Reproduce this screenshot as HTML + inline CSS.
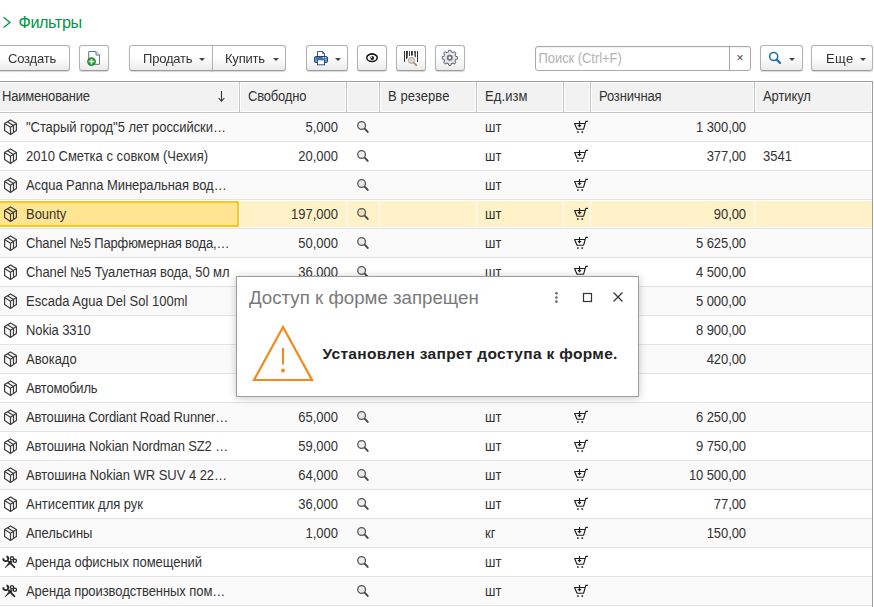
<!DOCTYPE html>
<html><head><meta charset="utf-8"><title>Номенклатура</title>
<style>
html,body{margin:0;padding:0;background:#fff;}
body{width:874px;height:607px;position:relative;overflow:hidden;font-family:"Liberation Sans",sans-serif;font-size:13px;color:#333;}
.abs{position:absolute;}
.title{position:absolute;left:18.5px;top:12.7px;font-size:16.2px;letter-spacing:-0.4px;color:#009646;line-height:18px;}
.btn{position:absolute;top:45px;height:24px;border:1px solid #b2b2b2;border-bottom-color:#9c9c9c;border-radius:3px;background:linear-gradient(#ffffff 0%,#ffffff 45%,#ebebeb 100%);box-shadow:0 1px 1px rgba(0,0,0,.16);box-sizing:content-box;color:#333;font-size:13px;letter-spacing:-0.2px;line-height:25px;white-space:nowrap;}
.btn span.t{position:absolute;top:0;will-change:transform;}
.car{position:absolute;top:12px;width:0;height:0;border-left:3.5px solid transparent;border-right:3.5px solid transparent;border-top:3.3px solid #444;}
.tbl{position:absolute;left:0;top:81px;width:872px;height:526px;border-top:1px solid #a0a0a0;border-right:1px solid #a0a0a0;}
.hc{position:absolute;top:0px;height:30px;background:#f2f2f2;border:1px solid #fff;box-sizing:border-box;color:#333;line-height:28px;font-size:13px;letter-spacing:-0.2px;white-space:nowrap;}
.ht{display:inline-block;line-height:28px;transform:scaleY(1.08);transform-origin:0 18.5px;}
.hs{position:absolute;top:0px;width:1px;height:30px;background:#c4c4c4;}
.hl{position:absolute;left:0;top:30px;width:872px;height:1px;background:#c4c4c4;}
.row{position:absolute;left:0;width:872px;height:28px;border-bottom:1px solid #e3e3e3;}
.row.o{background:#fafafa;}
.row.e{background:#ffffff;}
.c{position:absolute;top:0;height:28px;line-height:30px;white-space:nowrap;overflow:hidden;font-size:13px;color:#333;transform:scaleY(1.08);transform-origin:0 19.5px;}
.r{text-align:right;}
.ic{position:absolute;left:0;top:0;}
.mg{position:absolute;left:357px;top:8px;}
.ct{position:absolute;left:573px;top:7px;}
.sel .c.bg{background:#fff2c8;}
.dlg{position:absolute;left:236px;top:276px;width:401px;height:119px;background:#fff;border:1px solid #9e9e9e;box-shadow:0 1px 8px rgba(0,0,0,.22);}
</style></head><body>

<svg class="abs" style="left:2px;top:15px" width="10" height="14" viewBox="0 0 10 14"><path d="M1.6 2.2 L8 7.4 L1.6 12.6" fill="none" stroke="#009646" stroke-width="1.3"/></svg>
<div class="title">Фильтры</div>
<div class="btn" style="left:-3px;width:71px;"><span class="t" style="left:9.5px">Создать</span></div>
<div class="btn" style="left:79px;width:28px;"><svg class="abs" style="left:0;top:0" width="28" height="24" viewBox="0 0 28 24"><path d="M8.7 5.5 L16 5.5 L19.5 9 L19.5 18.3 L8.7 18.3 Z" fill="#fff" stroke="#5c7492" stroke-width="1"/><path d="M16 5.5 L16 9 L19.5 9" fill="#eef2f7" stroke="#5c7492" stroke-width="1"/><circle cx="11.5" cy="15.6" r="4.4" fill="#1e962c"/><path d="M11.5 12.9 L11.5 18.3 M8.8 15.6 L14.2 15.6" stroke="#fff" stroke-width="1.5"/></svg></div>
<div class="btn" style="left:129px;width:82px;border-radius:3px 0 0 3px;"><span class="t" style="left:13px">Продать</span><i class="car" style="left:69px"></i></div>
<div class="btn" style="left:212px;width:72px;border-radius:0 3px 3px 0;"><span class="t" style="left:12px">Купить</span><i class="car" style="left:60px"></i></div>
<div class="btn" style="left:306px;width:40px;"><svg class="abs" style="left:0;top:0" width="40" height="24" viewBox="0 0 40 24"><path d="M10.5 10 L10.5 5.5 L15.5 5.5 L17.5 7.5 L17.5 10" fill="#fff" stroke="#33587f" stroke-width="1"/><path d="M15.5 5.5 L15.5 7.5 L17.5 7.5" fill="none" stroke="#33587f" stroke-width="0.8"/><rect x="7.5" y="10.5" width="13" height="6" rx="1.3" fill="#6f97c4" stroke="#1f4b78" stroke-width="1"/><path d="M9 12 L19.5 12" stroke="#1f4b78" stroke-width="1"/><rect x="15.8" y="11.3" width="1.2" height="1" fill="#fff"/><rect x="17.8" y="11.3" width="1.2" height="1" fill="#fff"/><rect x="10.5" y="13.8" width="7" height="5" fill="#fff" stroke="#33587f" stroke-width="1"/></svg><i class="car" style="left:28px"></i></div>
<div class="btn" style="left:357px;width:28px;"><svg class="abs" style="left:0;top:0" width="28" height="24" viewBox="0 0 28 24"><ellipse cx="14" cy="11.7" rx="5.2" ry="3.7" fill="#fff" stroke="#1c1c1c" stroke-width="1.5"/><path d="M8.6 10.6 Q14 5.6 19.4 10.6" fill="none" stroke="#1c1c1c" stroke-width="1.4"/><circle cx="14.2" cy="12" r="1.9" fill="#1c1c1c"/><circle cx="13.6" cy="11.3" r="0.7" fill="#fff"/></svg></div>
<div class="btn" style="left:396px;width:28px;"><svg class="abs" style="left:0;top:0" width="28" height="24" viewBox="0 0 28 24"><g fill="#303030"><rect x="7" y="5" width="1" height="11"/><path d="M9 5 L11 5 L10.6 12 L9 13.5 Z"/><rect x="12" y="5" width="0.9" height="5"/><rect x="14" y="5" width="1.8" height="4.6"/><path d="M17.2 5 L18.8 5 L18.8 11.5 L17.6 10.5 Z"/><rect x="20" y="5" width="1" height="11"/></g><circle cx="14.4" cy="14.4" r="3" fill="#c9dcf7" stroke="#c59a78" stroke-width="1"/><path d="M16.9 16.9 L19.4 19.2" stroke="#c08a58" stroke-width="1.9" stroke-linecap="round"/></svg></div>
<div class="btn" style="left:435px;width:28px;"><svg class="abs" style="left:0;top:0" width="28" height="24" viewBox="0 0 28 24"><path d="M12.35 5.98 L12.47 5.13 Q12.35 4.34 12.97 4.25 L14.63 4.25 Q15.25 4.34 15.13 5.13 L15.25 5.98 A6.00 6.00 0 0 1 16.89 6.66 L17.58 6.15 Q18.05 5.50 18.55 5.87 L19.73 7.05 Q20.10 7.55 19.45 8.02 L18.94 8.71 A6.00 6.00 0 0 1 19.62 10.35 L20.47 10.47 Q21.26 10.35 21.35 10.97 L21.35 12.63 Q21.26 13.25 20.47 13.13 L19.62 13.25 A6.00 6.00 0 0 1 18.94 14.89 L19.45 15.58 Q20.10 16.05 19.73 16.55 L18.55 17.73 Q18.05 18.10 17.58 17.45 L16.89 16.94 A6.00 6.00 0 0 1 15.25 17.62 L15.13 18.47 Q15.25 19.26 14.63 19.35 L12.97 19.35 Q12.35 19.26 12.47 18.47 L12.35 17.62 A6.00 6.00 0 0 1 10.71 16.94 L10.02 17.45 Q9.55 18.10 9.05 17.73 L7.87 16.55 Q7.50 16.05 8.15 15.58 L8.66 14.89 A6.00 6.00 0 0 1 7.98 13.25 L7.13 13.13 Q6.34 13.25 6.25 12.63 L6.25 10.97 Q6.34 10.35 7.13 10.47 L7.98 10.35 A6.00 6.00 0 0 1 8.66 8.71 L8.15 8.02 Q7.50 7.55 7.87 7.05 L9.05 5.87 Q9.55 5.50 10.02 6.15 L10.71 6.66 A6.00 6.00 0 0 1 12.35 5.98 Z" fill="#ededed" stroke="#6d7482" stroke-width="1.05" stroke-linejoin="round"/><circle cx="13.8" cy="11.8" r="3.6" fill="none" stroke="#d4d6da" stroke-width="0.8"/><circle cx="13.8" cy="11.8" r="2.1" fill="#fff" stroke="#6d7482" stroke-width="1.8"/></svg></div>
<div class="abs" style="left:535px;top:46px;width:214px;height:23px;border:1px solid #a8a8a8;border-radius:3px;background:#fff;box-shadow:inset 0 1px 1px rgba(0,0,0,.06)"><span class="abs" style="left:2.5px;top:0;line-height:23px;font-size:13px;letter-spacing:-0.06px;color:#b4b4b4;transform:scaleY(1.08);transform-origin:0 16px">Поиск (Ctrl+F)</span><i class="abs" style="left:193px;top:0;width:1px;height:23px;background:#a8a8a8"></i><span class="abs" style="left:194px;top:0;width:20px;text-align:center;line-height:22px;font-size:12px;color:#444">×</span></div>
<div class="btn" style="left:760px;width:41px;"><svg class="abs" style="left:0;top:0" width="41" height="24" viewBox="0 0 41 24"><circle cx="12.7" cy="10.5" r="4" fill="none" stroke="#2673a8" stroke-width="1.6"/><path d="M15.7 13.6 L19 16.9" stroke="#2673a8" stroke-width="2.2" stroke-linecap="round"/></svg><i class="car" style="left:28px"></i></div>
<div class="btn" style="left:811px;width:60px;"><span class="t" style="left:13.5px;letter-spacing:0.4px">Еще</span><i class="car" style="left:48px"></i></div>
<div class="tbl">
<div class="hc" style="left:0px;width:239px;padding-left:2px;letter-spacing:-0.19px;border-left:0;"><span class="ht">Наименование</span></div>
<div class="hc" style="left:240px;width:106px;padding-left:7px;letter-spacing:-0.19px;"><span class="ht">Свободно</span></div>
<i class="hs" style="left:239px"></i>
<div class="hc" style="left:347px;width:32px;padding-left:7px;letter-spacing:0px;"><span class="ht"></span></div>
<i class="hs" style="left:346px"></i>
<div class="hc" style="left:380px;width:96px;padding-left:7px;letter-spacing:0.08px;"><span class="ht">В резерве</span></div>
<i class="hs" style="left:379px"></i>
<div class="hc" style="left:477px;width:86px;padding-left:7px;letter-spacing:0.1px;"><span class="ht">Ед.изм</span></div>
<i class="hs" style="left:476px"></i>
<div class="hc" style="left:564px;width:26px;padding-left:7px;letter-spacing:0px;"><span class="ht"></span></div>
<i class="hs" style="left:563px"></i>
<div class="hc" style="left:591px;width:163px;padding-left:7px;letter-spacing:-0.16px;"><span class="ht">Розничная</span></div>
<i class="hs" style="left:590px"></i>
<div class="hc" style="left:755px;width:117px;padding-left:7px;letter-spacing:-0.09px;"><span class="ht">Артикул</span></div>
<i class="hs" style="left:754px"></i>
<svg class="abs" style="left:216px;top:8px" width="11" height="13" viewBox="0 0 11 13"><path d="M5.5 1 L5.5 11 M2.6 8 L5.5 11.2 L8.4 8" fill="none" stroke="#333" stroke-width="1.1"/></svg>
<i class="hl"></i>
<div class="row o" style="top:31px">
<svg class="ic" width="22" height="28" viewBox="0 0 22 28"><g fill="none" stroke="#3c3c3c" stroke-width="1.2" stroke-linejoin="round"><path d="M10.5 6.9 L16.4 10.6 L16.4 17.5 L10.5 21.4 L4.6 17.5 L4.6 10.6 Z"/><path d="M4.6 10.6 L10.5 14.2 L16.4 10.6 M10.5 14.2 L10.5 21.4"/><path d="M7.5 8.8 L13.5 12.4 L13.5 19.3"/></g></svg>
<div class="c" style="left:26px;width:210px;letter-spacing:-0.063px">"Старый город"5 лет российски…</div>
<div class="c r" style="left:240px;width:98px">5,000</div>
<svg class="mg" width="14" height="14" viewBox="0 0 14 14"><circle cx="4.6" cy="4.55" r="3.85" fill="rgba(0,0,0,0.07)" stroke="#565656" stroke-width="1.3"/><path d="M7.9 7.9 L10.7 10.9" stroke="#484848" stroke-width="2" stroke-linecap="round"/></svg>
<div class="c" style="left:485px;width:70px">шт</div>
<svg class="ct" width="16" height="14" viewBox="0 0 16 14"><g fill="none" stroke="#1e1e1e" stroke-width="1.15" stroke-linejoin="round"><path d="M1.2 3.5 L11.6 3.5 M1.6 3.6 L4 9.2 L10.6 9.2 L12.8 1.4 L14.9 1.4"/></g><path d="M6.5 1 L6.5 5.4" stroke="#1e1e1e" stroke-width="1.1"/><path d="M4.4 5 L8.6 5 L6.5 7.6 Z" fill="#1e1e1e"/><rect x="4.1" y="11.3" width="1.6" height="1.5" fill="#1e1e1e"/><rect x="8.4" y="11.3" width="1.7" height="1.5" fill="#1e1e1e"/></svg>
<div class="c r" style="left:592px;width:154px;letter-spacing:-0.08px">1 300,00</div>
</div>
<div class="row e" style="top:60px">
<svg class="ic" width="22" height="28" viewBox="0 0 22 28"><g fill="none" stroke="#3c3c3c" stroke-width="1.2" stroke-linejoin="round"><path d="M10.5 6.9 L16.4 10.6 L16.4 17.5 L10.5 21.4 L4.6 17.5 L4.6 10.6 Z"/><path d="M4.6 10.6 L10.5 14.2 L16.4 10.6 M10.5 14.2 L10.5 21.4"/><path d="M7.5 8.8 L13.5 12.4 L13.5 19.3"/></g></svg>
<div class="c" style="left:26px;width:210px;letter-spacing:0.0px">2010 Сметка с совком (Чехия)</div>
<div class="c r" style="left:240px;width:98px">20,000</div>
<svg class="mg" width="14" height="14" viewBox="0 0 14 14"><circle cx="4.6" cy="4.55" r="3.85" fill="rgba(0,0,0,0.07)" stroke="#565656" stroke-width="1.3"/><path d="M7.9 7.9 L10.7 10.9" stroke="#484848" stroke-width="2" stroke-linecap="round"/></svg>
<div class="c" style="left:485px;width:70px">шт</div>
<svg class="ct" width="16" height="14" viewBox="0 0 16 14"><g fill="none" stroke="#1e1e1e" stroke-width="1.15" stroke-linejoin="round"><path d="M1.2 3.5 L11.6 3.5 M1.6 3.6 L4 9.2 L10.6 9.2 L12.8 1.4 L14.9 1.4"/></g><path d="M6.5 1 L6.5 5.4" stroke="#1e1e1e" stroke-width="1.1"/><path d="M4.4 5 L8.6 5 L6.5 7.6 Z" fill="#1e1e1e"/><rect x="4.1" y="11.3" width="1.6" height="1.5" fill="#1e1e1e"/><rect x="8.4" y="11.3" width="1.7" height="1.5" fill="#1e1e1e"/></svg>
<div class="c r" style="left:592px;width:154px;letter-spacing:-0.08px">377,00</div>
<div class="c" style="left:763px;width:100px">3541</div>
</div>
<div class="row o" style="top:89px">
<svg class="ic" width="22" height="28" viewBox="0 0 22 28"><g fill="none" stroke="#3c3c3c" stroke-width="1.2" stroke-linejoin="round"><path d="M10.5 6.9 L16.4 10.6 L16.4 17.5 L10.5 21.4 L4.6 17.5 L4.6 10.6 Z"/><path d="M4.6 10.6 L10.5 14.2 L16.4 10.6 M10.5 14.2 L10.5 21.4"/><path d="M7.5 8.8 L13.5 12.4 L13.5 19.3"/></g></svg>
<div class="c" style="left:26px;width:210px;letter-spacing:-0.063px">Acqua Panna Минеральная вод…</div>
<svg class="mg" width="14" height="14" viewBox="0 0 14 14"><circle cx="4.6" cy="4.55" r="3.85" fill="rgba(0,0,0,0.07)" stroke="#565656" stroke-width="1.3"/><path d="M7.9 7.9 L10.7 10.9" stroke="#484848" stroke-width="2" stroke-linecap="round"/></svg>
<div class="c" style="left:485px;width:70px">шт</div>
<svg class="ct" width="16" height="14" viewBox="0 0 16 14"><g fill="none" stroke="#1e1e1e" stroke-width="1.15" stroke-linejoin="round"><path d="M1.2 3.5 L11.6 3.5 M1.6 3.6 L4 9.2 L10.6 9.2 L12.8 1.4 L14.9 1.4"/></g><path d="M6.5 1 L6.5 5.4" stroke="#1e1e1e" stroke-width="1.1"/><path d="M4.4 5 L8.6 5 L6.5 7.6 Z" fill="#1e1e1e"/><rect x="4.1" y="11.3" width="1.6" height="1.5" fill="#1e1e1e"/><rect x="8.4" y="11.3" width="1.7" height="1.5" fill="#1e1e1e"/></svg>
</div>
<div class="row sel" style="top:118px;background:#fff">
<i class="abs" style="left:0;top:1px;width:237px;height:22px;background:#ffe591;border:2px solid #f8c81c;border-left:0"></i>
<i class="abs" style="left:240px;top:1px;width:106px;height:26px;background:#fff2c8"></i>
<i class="abs" style="left:347px;top:1px;width:32px;height:26px;background:#fff2c8"></i>
<i class="abs" style="left:380px;top:1px;width:96px;height:26px;background:#fff2c8"></i>
<i class="abs" style="left:477px;top:1px;width:86px;height:26px;background:#fff2c8"></i>
<i class="abs" style="left:564px;top:1px;width:26px;height:26px;background:#fff2c8"></i>
<i class="abs" style="left:591px;top:1px;width:163px;height:26px;background:#fff2c8"></i>
<i class="abs" style="left:755px;top:1px;width:117px;height:26px;background:#fff2c8"></i>
<svg class="ic" width="22" height="28" viewBox="0 0 22 28"><g fill="none" stroke="#3c3c3c" stroke-width="1.2" stroke-linejoin="round"><path d="M10.5 6.9 L16.4 10.6 L16.4 17.5 L10.5 21.4 L4.6 17.5 L4.6 10.6 Z"/><path d="M4.6 10.6 L10.5 14.2 L16.4 10.6 M10.5 14.2 L10.5 21.4"/><path d="M7.5 8.8 L13.5 12.4 L13.5 19.3"/></g></svg>
<div class="c" style="left:26px;width:210px;letter-spacing:-0.031px">Bounty</div>
<div class="c r" style="left:240px;width:98px">197,000</div>
<svg class="mg" width="14" height="14" viewBox="0 0 14 14"><circle cx="4.6" cy="4.55" r="3.85" fill="rgba(0,0,0,0.07)" stroke="#565656" stroke-width="1.3"/><path d="M7.9 7.9 L10.7 10.9" stroke="#484848" stroke-width="2" stroke-linecap="round"/></svg>
<div class="c" style="left:485px;width:70px">шт</div>
<svg class="ct" width="16" height="14" viewBox="0 0 16 14"><g fill="none" stroke="#1e1e1e" stroke-width="1.15" stroke-linejoin="round"><path d="M1.2 3.5 L11.6 3.5 M1.6 3.6 L4 9.2 L10.6 9.2 L12.8 1.4 L14.9 1.4"/></g><path d="M6.5 1 L6.5 5.4" stroke="#1e1e1e" stroke-width="1.1"/><path d="M4.4 5 L8.6 5 L6.5 7.6 Z" fill="#1e1e1e"/><rect x="4.1" y="11.3" width="1.6" height="1.5" fill="#1e1e1e"/><rect x="8.4" y="11.3" width="1.7" height="1.5" fill="#1e1e1e"/></svg>
<div class="c r" style="left:592px;width:154px;letter-spacing:-0.08px">90,00</div>
</div>
<div class="row o" style="top:147px">
<svg class="ic" width="22" height="28" viewBox="0 0 22 28"><g fill="none" stroke="#3c3c3c" stroke-width="1.2" stroke-linejoin="round"><path d="M10.5 6.9 L16.4 10.6 L16.4 17.5 L10.5 21.4 L4.6 17.5 L4.6 10.6 Z"/><path d="M4.6 10.6 L10.5 14.2 L16.4 10.6 M10.5 14.2 L10.5 21.4"/><path d="M7.5 8.8 L13.5 12.4 L13.5 19.3"/></g></svg>
<div class="c" style="left:26px;width:210px;letter-spacing:-0.139px">Chanel №5 Парфюмерная вода,…</div>
<div class="c r" style="left:240px;width:98px">50,000</div>
<svg class="mg" width="14" height="14" viewBox="0 0 14 14"><circle cx="4.6" cy="4.55" r="3.85" fill="rgba(0,0,0,0.07)" stroke="#565656" stroke-width="1.3"/><path d="M7.9 7.9 L10.7 10.9" stroke="#484848" stroke-width="2" stroke-linecap="round"/></svg>
<div class="c" style="left:485px;width:70px">шт</div>
<svg class="ct" width="16" height="14" viewBox="0 0 16 14"><g fill="none" stroke="#1e1e1e" stroke-width="1.15" stroke-linejoin="round"><path d="M1.2 3.5 L11.6 3.5 M1.6 3.6 L4 9.2 L10.6 9.2 L12.8 1.4 L14.9 1.4"/></g><path d="M6.5 1 L6.5 5.4" stroke="#1e1e1e" stroke-width="1.1"/><path d="M4.4 5 L8.6 5 L6.5 7.6 Z" fill="#1e1e1e"/><rect x="4.1" y="11.3" width="1.6" height="1.5" fill="#1e1e1e"/><rect x="8.4" y="11.3" width="1.7" height="1.5" fill="#1e1e1e"/></svg>
<div class="c r" style="left:592px;width:154px;letter-spacing:-0.08px">5 625,00</div>
</div>
<div class="row e" style="top:176px">
<svg class="ic" width="22" height="28" viewBox="0 0 22 28"><g fill="none" stroke="#3c3c3c" stroke-width="1.2" stroke-linejoin="round"><path d="M10.5 6.9 L16.4 10.6 L16.4 17.5 L10.5 21.4 L4.6 17.5 L4.6 10.6 Z"/><path d="M4.6 10.6 L10.5 14.2 L16.4 10.6 M10.5 14.2 L10.5 21.4"/><path d="M7.5 8.8 L13.5 12.4 L13.5 19.3"/></g></svg>
<div class="c" style="left:26px;width:210px;letter-spacing:-0.088px">Chanel №5 Туалетная вода, 50 мл</div>
<div class="c r" style="left:240px;width:98px">36,000</div>
<svg class="mg" width="14" height="14" viewBox="0 0 14 14"><circle cx="4.6" cy="4.55" r="3.85" fill="rgba(0,0,0,0.07)" stroke="#565656" stroke-width="1.3"/><path d="M7.9 7.9 L10.7 10.9" stroke="#484848" stroke-width="2" stroke-linecap="round"/></svg>
<div class="c" style="left:485px;width:70px">шт</div>
<svg class="ct" width="16" height="14" viewBox="0 0 16 14"><g fill="none" stroke="#1e1e1e" stroke-width="1.15" stroke-linejoin="round"><path d="M1.2 3.5 L11.6 3.5 M1.6 3.6 L4 9.2 L10.6 9.2 L12.8 1.4 L14.9 1.4"/></g><path d="M6.5 1 L6.5 5.4" stroke="#1e1e1e" stroke-width="1.1"/><path d="M4.4 5 L8.6 5 L6.5 7.6 Z" fill="#1e1e1e"/><rect x="4.1" y="11.3" width="1.6" height="1.5" fill="#1e1e1e"/><rect x="8.4" y="11.3" width="1.7" height="1.5" fill="#1e1e1e"/></svg>
<div class="c r" style="left:592px;width:154px;letter-spacing:-0.08px">4 500,00</div>
</div>
<div class="row o" style="top:205px">
<svg class="ic" width="22" height="28" viewBox="0 0 22 28"><g fill="none" stroke="#3c3c3c" stroke-width="1.2" stroke-linejoin="round"><path d="M10.5 6.9 L16.4 10.6 L16.4 17.5 L10.5 21.4 L4.6 17.5 L4.6 10.6 Z"/><path d="M4.6 10.6 L10.5 14.2 L16.4 10.6 M10.5 14.2 L10.5 21.4"/><path d="M7.5 8.8 L13.5 12.4 L13.5 19.3"/></g></svg>
<div class="c" style="left:26px;width:210px;letter-spacing:0.01px">Escada Agua Del Sol 100ml</div>
<div class="c" style="left:485px;width:70px">шт</div>
<svg class="ct" width="16" height="14" viewBox="0 0 16 14"><g fill="none" stroke="#1e1e1e" stroke-width="1.15" stroke-linejoin="round"><path d="M1.2 3.5 L11.6 3.5 M1.6 3.6 L4 9.2 L10.6 9.2 L12.8 1.4 L14.9 1.4"/></g><path d="M6.5 1 L6.5 5.4" stroke="#1e1e1e" stroke-width="1.1"/><path d="M4.4 5 L8.6 5 L6.5 7.6 Z" fill="#1e1e1e"/><rect x="4.1" y="11.3" width="1.6" height="1.5" fill="#1e1e1e"/><rect x="8.4" y="11.3" width="1.7" height="1.5" fill="#1e1e1e"/></svg>
<div class="c r" style="left:592px;width:154px;letter-spacing:-0.08px">5 000,00</div>
</div>
<div class="row e" style="top:234px">
<svg class="ic" width="22" height="28" viewBox="0 0 22 28"><g fill="none" stroke="#3c3c3c" stroke-width="1.2" stroke-linejoin="round"><path d="M10.5 6.9 L16.4 10.6 L16.4 17.5 L10.5 21.4 L4.6 17.5 L4.6 10.6 Z"/><path d="M4.6 10.6 L10.5 14.2 L16.4 10.6 M10.5 14.2 L10.5 21.4"/><path d="M7.5 8.8 L13.5 12.4 L13.5 19.3"/></g></svg>
<div class="c" style="left:26px;width:210px;letter-spacing:-0.108px">Nokia 3310</div>
<div class="c" style="left:485px;width:70px">шт</div>
<svg class="ct" width="16" height="14" viewBox="0 0 16 14"><g fill="none" stroke="#1e1e1e" stroke-width="1.15" stroke-linejoin="round"><path d="M1.2 3.5 L11.6 3.5 M1.6 3.6 L4 9.2 L10.6 9.2 L12.8 1.4 L14.9 1.4"/></g><path d="M6.5 1 L6.5 5.4" stroke="#1e1e1e" stroke-width="1.1"/><path d="M4.4 5 L8.6 5 L6.5 7.6 Z" fill="#1e1e1e"/><rect x="4.1" y="11.3" width="1.6" height="1.5" fill="#1e1e1e"/><rect x="8.4" y="11.3" width="1.7" height="1.5" fill="#1e1e1e"/></svg>
<div class="c r" style="left:592px;width:154px;letter-spacing:-0.08px">8 900,00</div>
</div>
<div class="row o" style="top:263px">
<svg class="ic" width="22" height="28" viewBox="0 0 22 28"><g fill="none" stroke="#3c3c3c" stroke-width="1.2" stroke-linejoin="round"><path d="M10.5 6.9 L16.4 10.6 L16.4 17.5 L10.5 21.4 L4.6 17.5 L4.6 10.6 Z"/><path d="M4.6 10.6 L10.5 14.2 L16.4 10.6 M10.5 14.2 L10.5 21.4"/><path d="M7.5 8.8 L13.5 12.4 L13.5 19.3"/></g></svg>
<div class="c" style="left:26px;width:210px;letter-spacing:0.002px">Авокадо</div>
<div class="c" style="left:485px;width:70px">шт</div>
<svg class="ct" width="16" height="14" viewBox="0 0 16 14"><g fill="none" stroke="#1e1e1e" stroke-width="1.15" stroke-linejoin="round"><path d="M1.2 3.5 L11.6 3.5 M1.6 3.6 L4 9.2 L10.6 9.2 L12.8 1.4 L14.9 1.4"/></g><path d="M6.5 1 L6.5 5.4" stroke="#1e1e1e" stroke-width="1.1"/><path d="M4.4 5 L8.6 5 L6.5 7.6 Z" fill="#1e1e1e"/><rect x="4.1" y="11.3" width="1.6" height="1.5" fill="#1e1e1e"/><rect x="8.4" y="11.3" width="1.7" height="1.5" fill="#1e1e1e"/></svg>
<div class="c r" style="left:592px;width:154px;letter-spacing:-0.08px">420,00</div>
</div>
<div class="row e" style="top:292px">
<svg class="ic" width="22" height="28" viewBox="0 0 22 28"><g fill="none" stroke="#3c3c3c" stroke-width="1.2" stroke-linejoin="round"><path d="M10.5 6.9 L16.4 10.6 L16.4 17.5 L10.5 21.4 L4.6 17.5 L4.6 10.6 Z"/><path d="M4.6 10.6 L10.5 14.2 L16.4 10.6 M10.5 14.2 L10.5 21.4"/><path d="M7.5 8.8 L13.5 12.4 L13.5 19.3"/></g></svg>
<div class="c" style="left:26px;width:210px;letter-spacing:-0.228px">Автомобиль</div>
<div class="c" style="left:485px;width:70px">шт</div>
<svg class="ct" width="16" height="14" viewBox="0 0 16 14"><g fill="none" stroke="#1e1e1e" stroke-width="1.15" stroke-linejoin="round"><path d="M1.2 3.5 L11.6 3.5 M1.6 3.6 L4 9.2 L10.6 9.2 L12.8 1.4 L14.9 1.4"/></g><path d="M6.5 1 L6.5 5.4" stroke="#1e1e1e" stroke-width="1.1"/><path d="M4.4 5 L8.6 5 L6.5 7.6 Z" fill="#1e1e1e"/><rect x="4.1" y="11.3" width="1.6" height="1.5" fill="#1e1e1e"/><rect x="8.4" y="11.3" width="1.7" height="1.5" fill="#1e1e1e"/></svg>
</div>
<div class="row o" style="top:321px">
<svg class="ic" width="22" height="28" viewBox="0 0 22 28"><g fill="none" stroke="#3c3c3c" stroke-width="1.2" stroke-linejoin="round"><path d="M10.5 6.9 L16.4 10.6 L16.4 17.5 L10.5 21.4 L4.6 17.5 L4.6 10.6 Z"/><path d="M4.6 10.6 L10.5 14.2 L16.4 10.6 M10.5 14.2 L10.5 21.4"/><path d="M7.5 8.8 L13.5 12.4 L13.5 19.3"/></g></svg>
<div class="c" style="left:26px;width:210px;letter-spacing:-0.168px">Автошина Cordiant Road Runner…</div>
<div class="c r" style="left:240px;width:98px">65,000</div>
<svg class="mg" width="14" height="14" viewBox="0 0 14 14"><circle cx="4.6" cy="4.55" r="3.85" fill="rgba(0,0,0,0.07)" stroke="#565656" stroke-width="1.3"/><path d="M7.9 7.9 L10.7 10.9" stroke="#484848" stroke-width="2" stroke-linecap="round"/></svg>
<div class="c" style="left:485px;width:70px">шт</div>
<svg class="ct" width="16" height="14" viewBox="0 0 16 14"><g fill="none" stroke="#1e1e1e" stroke-width="1.15" stroke-linejoin="round"><path d="M1.2 3.5 L11.6 3.5 M1.6 3.6 L4 9.2 L10.6 9.2 L12.8 1.4 L14.9 1.4"/></g><path d="M6.5 1 L6.5 5.4" stroke="#1e1e1e" stroke-width="1.1"/><path d="M4.4 5 L8.6 5 L6.5 7.6 Z" fill="#1e1e1e"/><rect x="4.1" y="11.3" width="1.6" height="1.5" fill="#1e1e1e"/><rect x="8.4" y="11.3" width="1.7" height="1.5" fill="#1e1e1e"/></svg>
<div class="c r" style="left:592px;width:154px;letter-spacing:-0.08px">6 250,00</div>
</div>
<div class="row e" style="top:350px">
<svg class="ic" width="22" height="28" viewBox="0 0 22 28"><g fill="none" stroke="#3c3c3c" stroke-width="1.2" stroke-linejoin="round"><path d="M10.5 6.9 L16.4 10.6 L16.4 17.5 L10.5 21.4 L4.6 17.5 L4.6 10.6 Z"/><path d="M4.6 10.6 L10.5 14.2 L16.4 10.6 M10.5 14.2 L10.5 21.4"/><path d="M7.5 8.8 L13.5 12.4 L13.5 19.3"/></g></svg>
<div class="c" style="left:26px;width:210px;letter-spacing:-0.123px">Автошина Nokian Nordman SZ2 …</div>
<div class="c r" style="left:240px;width:98px">59,000</div>
<svg class="mg" width="14" height="14" viewBox="0 0 14 14"><circle cx="4.6" cy="4.55" r="3.85" fill="rgba(0,0,0,0.07)" stroke="#565656" stroke-width="1.3"/><path d="M7.9 7.9 L10.7 10.9" stroke="#484848" stroke-width="2" stroke-linecap="round"/></svg>
<div class="c" style="left:485px;width:70px">шт</div>
<svg class="ct" width="16" height="14" viewBox="0 0 16 14"><g fill="none" stroke="#1e1e1e" stroke-width="1.15" stroke-linejoin="round"><path d="M1.2 3.5 L11.6 3.5 M1.6 3.6 L4 9.2 L10.6 9.2 L12.8 1.4 L14.9 1.4"/></g><path d="M6.5 1 L6.5 5.4" stroke="#1e1e1e" stroke-width="1.1"/><path d="M4.4 5 L8.6 5 L6.5 7.6 Z" fill="#1e1e1e"/><rect x="4.1" y="11.3" width="1.6" height="1.5" fill="#1e1e1e"/><rect x="8.4" y="11.3" width="1.7" height="1.5" fill="#1e1e1e"/></svg>
<div class="c r" style="left:592px;width:154px;letter-spacing:-0.08px">9 750,00</div>
</div>
<div class="row o" style="top:379px">
<svg class="ic" width="22" height="28" viewBox="0 0 22 28"><g fill="none" stroke="#3c3c3c" stroke-width="1.2" stroke-linejoin="round"><path d="M10.5 6.9 L16.4 10.6 L16.4 17.5 L10.5 21.4 L4.6 17.5 L4.6 10.6 Z"/><path d="M4.6 10.6 L10.5 14.2 L16.4 10.6 M10.5 14.2 L10.5 21.4"/><path d="M7.5 8.8 L13.5 12.4 L13.5 19.3"/></g></svg>
<div class="c" style="left:26px;width:210px;letter-spacing:-0.037px">Автошина Nokian WR SUV 4 22…</div>
<div class="c r" style="left:240px;width:98px">64,000</div>
<svg class="mg" width="14" height="14" viewBox="0 0 14 14"><circle cx="4.6" cy="4.55" r="3.85" fill="rgba(0,0,0,0.07)" stroke="#565656" stroke-width="1.3"/><path d="M7.9 7.9 L10.7 10.9" stroke="#484848" stroke-width="2" stroke-linecap="round"/></svg>
<div class="c" style="left:485px;width:70px">шт</div>
<svg class="ct" width="16" height="14" viewBox="0 0 16 14"><g fill="none" stroke="#1e1e1e" stroke-width="1.15" stroke-linejoin="round"><path d="M1.2 3.5 L11.6 3.5 M1.6 3.6 L4 9.2 L10.6 9.2 L12.8 1.4 L14.9 1.4"/></g><path d="M6.5 1 L6.5 5.4" stroke="#1e1e1e" stroke-width="1.1"/><path d="M4.4 5 L8.6 5 L6.5 7.6 Z" fill="#1e1e1e"/><rect x="4.1" y="11.3" width="1.6" height="1.5" fill="#1e1e1e"/><rect x="8.4" y="11.3" width="1.7" height="1.5" fill="#1e1e1e"/></svg>
<div class="c r" style="left:592px;width:154px;letter-spacing:-0.08px">10 500,00</div>
</div>
<div class="row e" style="top:408px">
<svg class="ic" width="22" height="28" viewBox="0 0 22 28"><g fill="none" stroke="#3c3c3c" stroke-width="1.2" stroke-linejoin="round"><path d="M10.5 6.9 L16.4 10.6 L16.4 17.5 L10.5 21.4 L4.6 17.5 L4.6 10.6 Z"/><path d="M4.6 10.6 L10.5 14.2 L16.4 10.6 M10.5 14.2 L10.5 21.4"/><path d="M7.5 8.8 L13.5 12.4 L13.5 19.3"/></g></svg>
<div class="c" style="left:26px;width:210px;letter-spacing:-0.025px">Антисептик для рук</div>
<div class="c r" style="left:240px;width:98px">36,000</div>
<svg class="mg" width="14" height="14" viewBox="0 0 14 14"><circle cx="4.6" cy="4.55" r="3.85" fill="rgba(0,0,0,0.07)" stroke="#565656" stroke-width="1.3"/><path d="M7.9 7.9 L10.7 10.9" stroke="#484848" stroke-width="2" stroke-linecap="round"/></svg>
<div class="c" style="left:485px;width:70px">шт</div>
<svg class="ct" width="16" height="14" viewBox="0 0 16 14"><g fill="none" stroke="#1e1e1e" stroke-width="1.15" stroke-linejoin="round"><path d="M1.2 3.5 L11.6 3.5 M1.6 3.6 L4 9.2 L10.6 9.2 L12.8 1.4 L14.9 1.4"/></g><path d="M6.5 1 L6.5 5.4" stroke="#1e1e1e" stroke-width="1.1"/><path d="M4.4 5 L8.6 5 L6.5 7.6 Z" fill="#1e1e1e"/><rect x="4.1" y="11.3" width="1.6" height="1.5" fill="#1e1e1e"/><rect x="8.4" y="11.3" width="1.7" height="1.5" fill="#1e1e1e"/></svg>
<div class="c r" style="left:592px;width:154px;letter-spacing:-0.08px">77,00</div>
</div>
<div class="row o" style="top:437px">
<svg class="ic" width="22" height="28" viewBox="0 0 22 28"><g fill="none" stroke="#3c3c3c" stroke-width="1.2" stroke-linejoin="round"><path d="M10.5 6.9 L16.4 10.6 L16.4 17.5 L10.5 21.4 L4.6 17.5 L4.6 10.6 Z"/><path d="M4.6 10.6 L10.5 14.2 L16.4 10.6 M10.5 14.2 L10.5 21.4"/><path d="M7.5 8.8 L13.5 12.4 L13.5 19.3"/></g></svg>
<div class="c" style="left:26px;width:210px;letter-spacing:-0.106px">Апельсины</div>
<div class="c r" style="left:240px;width:98px">1,000</div>
<svg class="mg" width="14" height="14" viewBox="0 0 14 14"><circle cx="4.6" cy="4.55" r="3.85" fill="rgba(0,0,0,0.07)" stroke="#565656" stroke-width="1.3"/><path d="M7.9 7.9 L10.7 10.9" stroke="#484848" stroke-width="2" stroke-linecap="round"/></svg>
<div class="c" style="left:485px;width:70px">кг</div>
<svg class="ct" width="16" height="14" viewBox="0 0 16 14"><g fill="none" stroke="#1e1e1e" stroke-width="1.15" stroke-linejoin="round"><path d="M1.2 3.5 L11.6 3.5 M1.6 3.6 L4 9.2 L10.6 9.2 L12.8 1.4 L14.9 1.4"/></g><path d="M6.5 1 L6.5 5.4" stroke="#1e1e1e" stroke-width="1.1"/><path d="M4.4 5 L8.6 5 L6.5 7.6 Z" fill="#1e1e1e"/><rect x="4.1" y="11.3" width="1.6" height="1.5" fill="#1e1e1e"/><rect x="8.4" y="11.3" width="1.7" height="1.5" fill="#1e1e1e"/></svg>
<div class="c r" style="left:592px;width:154px;letter-spacing:-0.08px">150,00</div>
</div>
<div class="row e" style="top:466px">
<svg class="ic" width="22" height="28" viewBox="0 0 22 28"><g fill="none" stroke="#2a2a2a"><path d="M3.4 10.3 A2.45 2.45 0 1 0 6.5 8.3" stroke-width="1.9"/><path d="M8.6 13.4 L14.3 19.2" stroke-width="1.9" stroke-linecap="round"/><circle cx="12" cy="10.3" r="1.6" stroke-width="1.3"/><circle cx="14.9" cy="12.8" r="1.6" stroke-width="1.3"/></g><path d="M10.6 12.2 L12.5 13.9 L4.9 20 Z" fill="#2a2a2a" stroke="#2a2a2a" stroke-width="0.5" stroke-linejoin="round"/></svg>
<div class="c" style="left:26px;width:210px;letter-spacing:-0.041px">Аренда офисных помещений</div>
<svg class="mg" width="14" height="14" viewBox="0 0 14 14"><circle cx="4.6" cy="4.55" r="3.85" fill="rgba(0,0,0,0.07)" stroke="#565656" stroke-width="1.3"/><path d="M7.9 7.9 L10.7 10.9" stroke="#484848" stroke-width="2" stroke-linecap="round"/></svg>
<div class="c" style="left:485px;width:70px">шт</div>
<svg class="ct" width="16" height="14" viewBox="0 0 16 14"><g fill="none" stroke="#1e1e1e" stroke-width="1.15" stroke-linejoin="round"><path d="M1.2 3.5 L11.6 3.5 M1.6 3.6 L4 9.2 L10.6 9.2 L12.8 1.4 L14.9 1.4"/></g><path d="M6.5 1 L6.5 5.4" stroke="#1e1e1e" stroke-width="1.1"/><path d="M4.4 5 L8.6 5 L6.5 7.6 Z" fill="#1e1e1e"/><rect x="4.1" y="11.3" width="1.6" height="1.5" fill="#1e1e1e"/><rect x="8.4" y="11.3" width="1.7" height="1.5" fill="#1e1e1e"/></svg>
</div>
<div class="row o" style="top:495px">
<svg class="ic" width="22" height="28" viewBox="0 0 22 28"><g fill="none" stroke="#2a2a2a"><path d="M3.4 10.3 A2.45 2.45 0 1 0 6.5 8.3" stroke-width="1.9"/><path d="M8.6 13.4 L14.3 19.2" stroke-width="1.9" stroke-linecap="round"/><circle cx="12" cy="10.3" r="1.6" stroke-width="1.3"/><circle cx="14.9" cy="12.8" r="1.6" stroke-width="1.3"/></g><path d="M10.6 12.2 L12.5 13.9 L4.9 20 Z" fill="#2a2a2a" stroke="#2a2a2a" stroke-width="0.5" stroke-linejoin="round"/></svg>
<div class="c" style="left:26px;width:210px;letter-spacing:-0.072px">Аренда производственных пом…</div>
<svg class="mg" width="14" height="14" viewBox="0 0 14 14"><circle cx="4.6" cy="4.55" r="3.85" fill="rgba(0,0,0,0.07)" stroke="#565656" stroke-width="1.3"/><path d="M7.9 7.9 L10.7 10.9" stroke="#484848" stroke-width="2" stroke-linecap="round"/></svg>
<div class="c" style="left:485px;width:70px">шт</div>
<svg class="ct" width="16" height="14" viewBox="0 0 16 14"><g fill="none" stroke="#1e1e1e" stroke-width="1.15" stroke-linejoin="round"><path d="M1.2 3.5 L11.6 3.5 M1.6 3.6 L4 9.2 L10.6 9.2 L12.8 1.4 L14.9 1.4"/></g><path d="M6.5 1 L6.5 5.4" stroke="#1e1e1e" stroke-width="1.1"/><path d="M4.4 5 L8.6 5 L6.5 7.6 Z" fill="#1e1e1e"/><rect x="4.1" y="11.3" width="1.6" height="1.5" fill="#1e1e1e"/><rect x="8.4" y="11.3" width="1.7" height="1.5" fill="#1e1e1e"/></svg>
</div>
</div>
<div class="dlg">
<div class="abs" style="left:12px;top:8.5px;font-size:18.7px;line-height:24px;color:#7a7a7a;white-space:nowrap">Доступ к форме запрещен</div>
<svg class="abs" style="left:316px;top:14px" width="76" height="16" viewBox="0 0 76 16"><g fill="#6e6e6e"><circle cx="3.4" cy="2.3" r="1.35"/><circle cx="3.4" cy="6.5" r="1.35"/><circle cx="3.4" cy="10.7" r="1.35"/></g><rect x="30.5" y="2.5" width="8" height="8" fill="none" stroke="#333" stroke-width="1.2"/><path d="M60.5 1.5 L69.5 10.5 M69.5 1.5 L60.5 10.5" stroke="#333" stroke-width="1.2"/></svg>
<svg class="abs" style="left:15px;top:46px" width="64" height="60" viewBox="0 0 64 60"><path d="M31 4 L60 57 L2 57 Z" fill="none" stroke="#f08a1c" stroke-width="2.2" stroke-linejoin="miter"/><path d="M31 25 L31 41.5" stroke="#f08a1c" stroke-width="2.1"/><circle cx="31" cy="47.5" r="2" fill="#f08a1c"/></svg>
<div class="abs" style="left:85.5px;top:65.5px;font-size:15.5px;letter-spacing:0.33px;font-weight:bold;line-height:22px;color:#222;white-space:nowrap">Установлен запрет доступа к форме.</div>
</div>
</body></html>
